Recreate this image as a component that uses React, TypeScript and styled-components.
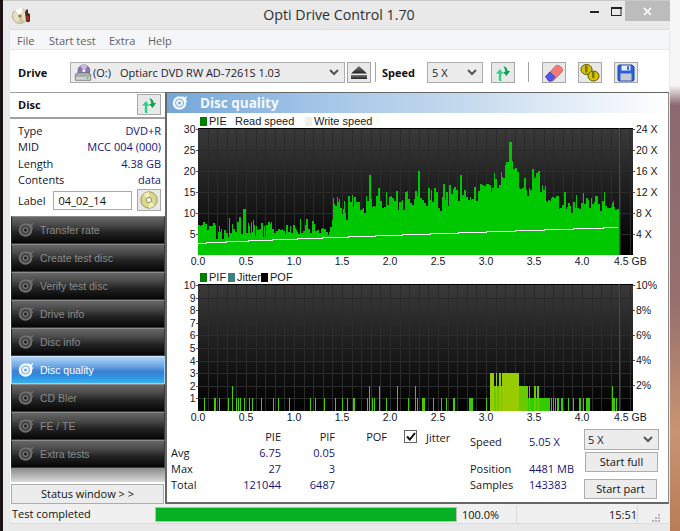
import React from "react";
import styled, { createGlobalStyle } from "styled-components";

const UI = `"Open Sans", "Noto Sans", sans-serif`;
const ARIAL = `"Liberation Sans", Arial, sans-serif`;

const Global = createGlobalStyle`
  html, body { margin: 0; padding: 0; background: #000; }
  body { width: 680px; height: 531px; overflow: hidden; font-family: ${UI}; }
  * { box-sizing: border-box; }
`;

const Desktop = styled.div`
  width: 680px; height: 531px; display: flex; padding-left: 3px;
  background:
    linear-gradient(90deg, #1a1214 0 3px, transparent 3px),
    linear-gradient(180deg, #f6f6f6 0, #f6f6f6 85px, #8a6a70 105px, #96706e 300px, #c89472 430px, #b87c58 531px);
`;
const Win = styled.div`
  width: 667px; height: 531px; background: #e9e9e9; border-top: 1px solid #c9c9c9;
  display: flex; flex-direction: column;
`;
const TitleBar = styled.div`
  height: 28px; flex: none; display: grid; grid-template-columns: 1fr auto 1fr; align-items: start;
`;
const AppIconBox = styled.div`padding: 6px 0 0 9px; height: 28px;`;
const Title = styled.div`
  font-size: 14.2px; line-height: 28px; color: #2c2f33; white-space: nowrap; margin-left: 5px;
`;
const WinControls = styled.div`display: flex; justify-content: flex-end; align-items: flex-start;`;
const Ctl = styled.div<{ $w: number }>`
  width: ${(p) => p.$w}px; height: 20px; display: flex; align-items: center; justify-content: center;
`;
const CloseBtn = styled(Ctl)`background: #bcbcbc;`;

const Client = styled.div`
  margin: 0 0 7px 7px; width: 659px; flex: 1; min-height: 0; display: flex; flex-direction: column; background: #fff;
  border-top: 1px solid #dcdcdc;
`;
const MenuBar = styled.div`
  height: 20px; flex: none; display: flex; background: #f5f6f7; border-bottom: 1px solid #e8e8e8;
  font-size: 11px; line-height: 21px; color: #5e6266; padding-left: 7px;
`;
const MenuItem = styled.span<{ $w: number }>`width: ${(p) => p.$w}px; white-space: nowrap;`;

const ToolBar = styled.div`height: 42px; flex: none; display: flex; align-items: flex-start; padding-top: 12px; background: #fff;`;
const Strong = styled.span<{ $ml: number; $w: number }>`
  font-size: 11px; font-weight: 700; color: #111; line-height: 22px;
  margin-left: ${(p) => p.$ml}px; width: ${(p) => p.$w}px;
`;
const SelectBox = styled.div<{ $w: number; $ml?: number }>`
  width: ${(p) => p.$w}px; height: 21px; margin-left: ${(p) => p.$ml ?? 0}px; flex: none;
  border: 1px solid #adadad; background: #ececec; display: flex; align-items: center;
  font-size: 11px; color: #1a1a2e; padding: 0 5px 0 3px; white-space: nowrap;
`;
const SelectText = styled.span<{ $ml?: number }>`flex: 1; margin-left: ${(p) => p.$ml ?? 0}px;`;
const DriveLetter = styled.span`width: 27px; margin-left: 1px; flex: none;`;
const ToolButton = styled.div<{ $ml?: number; $h?: number }>`
  width: 24px; height: ${(p) => p.$h ?? 21}px; flex: none; margin-left: ${(p) => p.$ml ?? 0}px;
  border: 1px solid #a8a8a8; background: #e8e8e8; display: flex; align-items: center; justify-content: center;
`;
const Sep = styled.div<{ $ml: number }>`width: 1px; height: 20px; background: #a5a5a5; margin-left: ${(p) => p.$ml}px; flex: none;`;

const Body = styled.div`flex: 1; min-height: 0; display: flex;`;
const LeftCol = styled.div`width: 156px; flex: none; display: flex; flex-direction: column; background: #fff;`;
const DiscPanel = styled.div`height: 123px; flex: none; border-top: 1px solid #9f9f9f;`;
const DiscHead = styled.div`
  height: 26px; display: flex; align-items: flex-start; justify-content: space-between;
  padding: 1px 5px 0 8px; border-bottom: 2px solid #a0a0a0;
  font-size: 11px; font-weight: 700; color: #111; line-height: 22px;
`;
const DiscRows = styled.div`padding: 4px 5px 0 8px; font-size: 11px;`;
const DiscRow = styled.div`display: flex; justify-content: space-between; height: 16.3px; line-height: 16px; color: #15151f;`;
const Blue = styled.span`color: #16167a;`;
const LabelRow = styled.div`display: flex; align-items: center; height: 22px; margin-top: 1px; color: #15151f;`;
const LabelInput = styled.div`
  width: 81px; height: 19px; margin-left: 7px; border: 1px solid #a9a9a9; background: #fff;
  line-height: 17px; padding-left: 5px; color: #111;
`;

const Nav = styled.div`
  margin-top: 1px; margin-left: 1px; width: 154px; flex: none; display: flex; flex-direction: column;
  background: linear-gradient(#8a8a8a, #d9d9d9) bottom / 100% 14px no-repeat; padding-bottom: 14px;
`;
const NavItem = styled.div<{ $active?: boolean }>`
  height: 28px; display: flex; align-items: center; padding-left: 6px; gap: 6px;
  border: 1px solid ${(p) => (p.$active ? "#9cd0f8" : "#3a3a3a")};
  border-top-color: ${(p) => (p.$active ? "#cfe6fb" : "#8a8a8a")};
  border-left-color: ${(p) => (p.$active ? "#9cd0f8" : "#222")};
  background: ${(p) =>
    p.$active
      ? "linear-gradient(#aed4f7 0%, #6ea6e3 35%, #3c7fd2 55%, #2f8fe0 75%, #35b3ef 100%)"
      : "linear-gradient(#666 0%, #4a4a4a 30%, #222 60%, #050505 100%)"};
  color: ${(p) => (p.$active ? "#fff" : "#8a8a8a")};
  font-family: ${ARIAL}; font-size: 10.5px; white-space: nowrap;
`;
const StatusBtn = styled.div`
  margin: 2px 0 0 1px; width: 153px; height: 20px; border: 1px solid #adadad; background: #ececec;
  text-align: center; font-size: 11px; line-height: 18px; color: #111;
`;

const Main = styled.div`
  flex: 1; min-width: 0; height: 412px; border: 2px solid #666; border-width: 1px 1px 2px 2px;
  border-right-color: #8a8a8a; margin-left: -1px; background: #fff; display: flex; flex-direction: column;
`;
const MainHead = styled.div`
  height: 20px; flex: none; display: flex; align-items: center; padding-left: 5px; gap: 12px;
  background: linear-gradient(90deg, #74a6d8 0%, #a3c5e7 30%, #c5daee 60%, #fff 100%);
  color: #f4f8fc; font-size: 13.5px; font-weight: 700;
`;
const Legend = styled.div<{ $mt: number }>`
  height: 14px; flex: none; margin-top: ${(p) => p.$mt}px; display: flex; align-items: center; padding-left: 33px;
  font-family: ${ARIAL}; font-size: 11px; color: #1a1a22; white-space: nowrap;
`;
const Swatch = styled.i<{ $c: string }>`
  width: 7px; height: 9px; background: ${(p) => p.$c}; display: block; margin-right: 2px; flex: none;
`;
const LegendText = styled.span<{ $w?: number }>`${(p) => (p.$w ? `width: ${p.$w}px;` : "")} flex: none;`;
const ChartSvg = styled.svg`display: block; flex: none; width: 501px; overflow: visible;`;

const Stats = styled.div`flex: 1; display: flex; font-size: 11px; color: #15151f; padding-top: 4px;`;
const StatsTable = styled.div`
  width: 250px; flex: none; display: grid; grid-template-columns: 47px 63px 54px 52px 30px;
  grid-auto-rows: 16px; line-height: 16px; padding-left: 4px;
`;
const Cell = styled.div<{ $right?: boolean; $blue?: boolean }>`
  text-align: ${(p) => (p.$right ? "right" : "left")};
  color: ${(p) => (p.$blue ? "#16167a" : "#15151f")};
`;
const CheckWrap = styled.div`display: flex; justify-content: flex-end; padding-top: 1px;`;
const Check = styled.div`
  width: 13px; height: 13px; border: 1px solid #666; background: #fff;
  display: flex; align-items: center; justify-content: center;
`;
const JitterCol = styled.div`width: 44px; flex: none; margin-left: 9px; padding-top: 1px; line-height: 16px;`;
const SpeedCol = styled.div`
  width: 115px; height: 64px; flex: none; display: grid; grid-template-columns: 59px 1fr; grid-template-rows: 16px 11px 16px 16px;
  padding-top: 5px; line-height: 16px;
`;
const RightCol = styled.div`width: 76px; flex: none; display: flex; flex-direction: column; margin-left: -1px; margin-top: 0;`;
const PushBtn = styled.div<{ $ml: number; $mt: number }>`
  width: 73px; height: 20px; margin-left: ${(p) => p.$ml}px; margin-top: ${(p) => p.$mt}px;
  border: 1px solid #adadad; background: #ececec; text-align: center; line-height: 18px; color: #111;
`;

const StatusBar = styled.div`
  height: 20px; flex: none; background: #f0f0f0; display: flex; align-items: flex-start;
  font-size: 11px; color: #111; border-bottom: 1px solid #dcdcdc; margin-top: 0;
`;
const StatusText = styled.div`width: 145px; padding-left: 2px; line-height: 20px; flex: none;`;
const Progress = styled.div`
  width: 302px; height: 15px; flex: none; margin-top: 3px; border: 1px solid #bcbcbc; background: #06b025;
`;
const Percent = styled.div`width: 60px; padding-left: 5px; line-height: 20px; flex: none; border-right: 1px solid #dcdcdc; height: 19px; margin-top: 1px;`;
const Clock = styled.div`flex: 1; text-align: right; line-height: 20px; border-right: 1px solid #dcdcdc; height: 19px; margin-top: 1px;`;
const Grip = styled.div`width: 31px; height: 19px; flex: none; display: flex; justify-content: flex-end; align-items: flex-end; padding-right: 8px;`;

/* ---------- chart data ---------- */
function rng(seed: number) {
  let a = seed;
  return () => {
    a |= 0; a = (a + 0x6d2b79f5) | 0;
    let t = Math.imul(a ^ (a >>> 15), 1 | a);
    t = (t + Math.imul(t ^ (t >>> 7), 61 | t)) ^ t;
    return ((t ^ (t >>> 14)) >>> 0) / 4294967296;
  };
}
const ENV: [number, number, number][] = [
  [0, 5, 8.5], [0.5, 5, 8], [1, 5, 7.5], [1.37, 5, 7.5], [1.39, 5, 9], [1.41, 12, 14], [1.5, 9.5, 13], [1.7, 10.5, 14],
  [1.85, 11, 15], [2, 11.5, 14.5], [2.3, 12.5, 16.5], [2.5, 11.5, 15.5], [2.8, 13, 16.5], [3, 14, 18], [3.15, 16, 20],
  [3.22, 20, 25], [3.28, 18, 24], [3.35, 15, 19], [3.5, 15, 20], [3.6, 13, 16], [3.75, 10.5, 13], [4, 11, 13.5],
  [4.3, 11, 13.5], [4.42, 8.5, 11],
];
function env(g: number): [number, number] {
  for (let i = 1; i < ENV.length; i++) {
    if (g <= ENV[i][0]) {
      const [a, l0, h0] = ENV[i - 1];
      const [b, l1, h1] = ENV[i];
      const t = (g - a) / (b - a);
      return [l0 + (l1 - l0) * t, h0 + (h1 - h0) * t];
    }
  }
  return [8, 11];
}
const SPIKES: Record<number, number> = { 46: 11, 171: 19, 221: 20, 312: 27, 313: 27, 42: 9, 150: 14, 180: 16, 262: 19, 340: 20, 367: 15, 398: 14, 406: 15 };
function piePath() {
  const r = rng(11);
  let d = "";
  const col = (x: number, w: number, v: number) => {
    const y = Math.round(254 - v * 4.2);
    d += `M${198 + x} ${y}V254H${198 + x + w}V${y}Z`;
  };
  let x = 0;
  while (x < 421) {
    const w = r() < 0.55 ? 2 : 1;
    const [l, h] = env(x / 96);
    const k = r();
    let v = k < 0.08 ? l - 1.5 * r() : k > 0.88 ? h + 1.2 * r() : l + (h - l) * r();
    if (SPIKES[x]) v = SPIKES[x];
    else if (SPIKES[x + 1]) v = SPIKES[x + 1];
    col(x, Math.min(w, 421 - x), v);
    x += w;
  }
  return d;
}
const PIE = piePath();
const SPEED = (() => {
  let p = "";
  for (let x = 0; x <= 420; x += 1) {
    const y = Math.round(242 - 16 * Math.pow(x / 420, 0.88)) + 0.5;
    p += `${198 + x},${y} `;
  }
  return p;
})();

const z1 = [118,146,150,163,190,214,219,226,238,253,262,289,325,340,373,436,451,478,511,532,545,547,563,566,607,622,628,664,730,757,772,778];
const z2 = [202,613,643,697,751];
const r1 = [8,13,40,64,79,100,103,199,393,400,405,412,415,445,460,490,589];
const PifBars: { x: number; w: number; h: number; c: string }[] = [
  ...z1.map((z) => ({ x: 165 + z / 3, w: 1, h: 1, c: "#44cc00" })),
  ...z2.map((z) => ({ x: 165 + z / 3, w: 1, h: 2, c: "#44cc00" })),
  ...r1.map((z) => ({ x: 420 + z / 3, w: 1, h: 1, c: "#44cc00" })),
  ...[[148,160],[300,390],[423,429],[478,484],[498,510],[576,585]].map(([a, b]) => ({ x: 420 + a / 3, w: (b - a) / 3, h: 1, c: "#33cc00" })),
  { x: 420 + 576 / 3, w: 1, h: 2, c: "#44cc00" },
  ...[[210,325],[328,332],[341,346],[352,357]].map(([a, b]) => ({ x: 420 + a / 3, w: (b - a) / 3, h: 2, c: "#66cc00" })),
  ...[[210,222],[228,232],[238,244],[246,297]].map(([a, b]) => ({ x: 420 + a / 3, w: (b - a) / 3, h: 3, c: "#99cc00" })),
].map((b) => ({ ...b, x: Math.round(b.x), w: Math.max(1, Math.round(b.w)) }));
const Stripes = [255, 260, 266, 272, 278].map((z) => Math.round(420 + z / 3));

const XLAB = ["0.0","0.5","1.0","1.5","2.0","2.5","3.0","3.5","4.0"];

function ChartFrame({ id, top, h, leftLabels, rightLabels, hLines, children }: {
  id: string; top: number; h: number;
  leftLabels: [string, number][]; rightLabels: [string, number][]; hLines: number[]; children: React.ReactNode;
}) {
  const bottom = top + h;
  const vx: number[] = [];
  for (let x = 198 + 9.6; x < 633; x += 9.6) vx.push(Math.round(x) + 0.5);
  return (
    <ChartSvg viewBox={`167 ${top} 501 ${h + 14}`} height={h + 14}>
      <defs>
        <linearGradient id={id} x1="0" y1="0" x2="0" y2="1">
          <stop offset="0" stopColor="#3a3a3a" />
          <stop offset="1" stopColor="#000" />
        </linearGradient>
      </defs>
      <rect x={198} y={top} width={435} height={h} fill={`url(#${id})`} />
      <g stroke="#2b2b2b" strokeWidth="1" shapeRendering="crispEdges">
        {vx.map((x) => <line key={x} x1={x} x2={x} y1={top} y2={bottom} />)}
        {hLines.map((y) => <line key={y} x1={198} x2={633} y1={y + 0.5} y2={y + 0.5} />)}
      </g>
      <line x1={198} x2={633} y1={top + 0.5} y2={top + 0.5} stroke="#000" strokeWidth="1" shapeRendering="crispEdges" />
      <g shapeRendering="crispEdges">{children}</g>
      <line x1={619.5} x2={619.5} y1={top} y2={bottom} stroke="#c81414" strokeWidth="1" shapeRendering="crispEdges" />
      <g stroke="#555" shapeRendering="crispEdges">
        {leftLabels.map(([l, y]) => <line key={l} x1={196} x2={198} y1={y + 0.5} y2={y + 0.5} />)}
        {rightLabels.map(([l, y]) => <line key={l} x1={633} x2={635} y1={y + 0.5} y2={y + 0.5} />)}
      </g>
      <g fontFamily={ARIAL} fontSize="10.5" fill="#15151f">
        {leftLabels.map(([l, y]) => <text key={l} x={195.5} y={y + 3.5} textAnchor="end">{l}</text>)}
        {rightLabels.map(([l, y]) => <text key={l} x={636} y={y + 3.5}>{l}</text>)}
        {XLAB.map((l, i) => <text key={l} x={198 + i * 48} y={bottom + 10} textAnchor="middle">{l}</text>)}
        <text x={614} y={bottom + 10}>4.5 GB</text>
      </g>
    </ChartSvg>
  );
}

/* ---------- icons ---------- */
const Chevron = () => (
  <svg width="10" height="7" viewBox="0 0 10 7"><path d="M1 1l4 4 4-4" fill="none" stroke="#555" strokeWidth="2" /></svg>
);
const AppIcon = () => (
  <svg width="20" height="18" viewBox="0 0 20 18">
    <circle cx="8" cy="9" r="7.5" fill="#e6dfc4" stroke="#b5ad92" />
    <path d="M8 9L3 3a7.5 7.5 0 0 1 8-1.4z" fill="#fff" />
    <path d="M8 9l5 6a7.5 7.5 0 0 1-6 1.4z" fill="#cfc6a0" />
    <circle cx="8" cy="9" r="1.8" fill="#8b8468" />
    <path d="M13 5l2-3 1 1v3l2 1v7c0 1.500-4 1.500-4 0z" fill="#4b2a22" />
    <path d="M14.500 9h2.500v4.500h-2.500z" fill="#a82a20" />
  </svg>
);
const DriveIcon = () => (
  <svg width="18" height="18" viewBox="0 0 20 19">
    <circle cx="11" cy="7" r="6.5" fill="#8c78b8" stroke="#6a5a94" />
    <path d="M11 7L7 2a6.500 6.500 0 0 1 8 0z" fill="#c9bde2" />
    <circle cx="11" cy="7" r="1.700" fill="#f0eaf8" />
    <path d="M1.500 11l3-2h11l3 2v6.500h-17z" fill="#a9aeb0" stroke="#6d7274" />
    <path d="M2 14h16v3H2z" fill="#d2d6d6" />
    <rect x="14" y="14.500" width="2" height="1.500" fill="#3fb04a" />
  </svg>
);
const EjectIcon = () => (
  <svg width="16" height="13" viewBox="0 0 16 13">
    <defs>
      <linearGradient id="ej" x1="0" y1="0" x2="0" y2="1"><stop offset="0" stopColor="#777" /><stop offset="1" stopColor="#222" /></linearGradient>
    </defs>
    <path d="M8 0l8 7.500H0z" fill="url(#ej)" />
    <rect y="9" width="16" height="4" fill="url(#ej)" />
  </svg>
);
const SwapIcon = () => (
  <svg width="18" height="18" viewBox="0 0 18 18">
    <path d="M5 17.500C3.800 15 4.200 12.500 4.500 10H1L6 4.500 10.800 10H8c-.5 2.500-.8 5 .5 7.500z" fill="#30d088" stroke="#fff" strokeWidth=".7" />
    <path d="M8.500 1.500c3 .3 5 2 5.500 5H17L12.500 12.500 8 7.500h2.800C10.500 5 9.800 3 8.500 1.500z" fill="#14a055" stroke="#fff" strokeWidth=".7" />
  </svg>
);
const EraserIcon = () => (
  <svg width="20" height="18" viewBox="0 0 20 18">
    <path d="M1.500 12.500L11 2.500c1.500-1.500 3-1.500 5-.2l1.500 1.400c1.500 1.500 1.500 3 .2 4.500L9 17l-4 .2z" fill="#f47a7a" stroke="#c25656" strokeWidth=".7" />
    <path d="M1.500 12.500L6 8l5 5-3.500 4H4.500z" fill="#4a58ee" stroke="#3540b0" strokeWidth=".7" />
  </svg>
);
const CoinsIcon = () => (
  <svg width="20" height="19" viewBox="0 0 20 19">
    <ellipse cx="6.500" cy="6.500" rx="5.500" ry="5" fill="#d6c400" stroke="#5d5400" />
    <rect x="5" y="2.500" width="2.500" height="7" fill="#77770a" />
    <ellipse cx="13.500" cy="13" rx="5.500" ry="5" fill="#d6c400" stroke="#5d5400" />
    <rect x="12" y="8" width="2.500" height="7" fill="#77770a" />
  </svg>
);
const SaveIcon = () => (
  <svg width="18" height="18" viewBox="0 0 18 18">
    <path d="M1 2.500A1.500 1.500 0 0 1 2.500 1H15l2 2v12.500a1.500 1.500 0 0 1-1.500 1.500h-13A1.500 1.500 0 0 1 1 15.500z" fill="#2a62d8" stroke="#1c449c" />
    <rect x="4.500" y="1.500" width="9" height="5" fill="#e8eef8" />
    <rect x="10" y="2.300" width="2" height="3.400" fill="#2a62d8" />
    <rect x="3.500" y="9.500" width="11" height="7" fill="#c6cad2" />
  </svg>
);
const CdIcon = () => (
  <svg width="18" height="18" viewBox="0 0 18 18">
    <circle cx="9" cy="9" r="8.200" fill="#dbd88a" stroke="#9a9a60" />
    <path d="M9 9L3.500 3.500A8 8 0 0 1 9 1z" fill="#f2f0c0" />
    <path d="M9 9l5.500 5.500A8 8 0 0 1 9 17z" fill="#f2f0c0" />
    <circle cx="9" cy="9" r="2.600" fill="#fff" stroke="#8d8d5a" />
  </svg>
);
const NavIcon = ({ c, hole }: { c: string; hole: string }) => (
  <svg width="16" height="16" viewBox="0 0 16 16">
    <circle cx="7.500" cy="8" r="6.800" fill={c} />
    <circle cx="7.500" cy="8" r="4" fill="none" stroke={hole} strokeWidth="1" />
    <circle cx="7.500" cy="8" r="1.500" fill={hole} />
    <path d="M10.500 1.500l1.500 2 2-1-1 2.500 2 1.500" fill="none" stroke={c} strokeWidth="1.400" />
  </svg>
);
const GripIcon = () => (
  <svg width="9" height="9" viewBox="0 0 9 9" fill="#b5b5b5">
    <rect x="6" y="0" width="2" height="2" /><rect x="3" y="3" width="2" height="2" /><rect x="6" y="3" width="2" height="2" />
    <rect x="0" y="6" width="2" height="2" /><rect x="3" y="6" width="2" height="2" /><rect x="6" y="6" width="2" height="2" />
  </svg>
);

/* ---------- page ---------- */
const NAV = ["Transfer rate", "Create test disc", "Verify test disc", "Drive info", "Disc info", "Disc quality", "CD Bler", "FE / TE", "Extra tests"];

const hTop = [149, 170, 191, 212, 233];
const hBot = [297, 309, 322, 334, 347, 360, 372, 385, 397];

export default function App() {
  return (
    <Desktop>
      <Global />
      <Win>
        <TitleBar>
          <AppIconBox><AppIcon /></AppIconBox>
          <Title>Opti Drive Control 1.70</Title>
          <WinControls>
            <Ctl $w={26}><svg width="9" height="3" viewBox="0 0 9 3"><rect width="9" height="2" y="1" fill="#222" /></svg></Ctl>
            <Ctl $w={18}><svg width="11" height="9" viewBox="0 0 11 9"><rect x=".5" y="1" width="9.500" height="7.500" fill="none" stroke="#222" /><rect x="0" y="0" width="11" height="2" fill="#222" /></svg></Ctl>
            <CloseBtn $w={45}><svg width="9" height="9" viewBox="0 0 9 9"><path d="M1 1l7 7M8 1l-7 7" stroke="#fff" strokeWidth="1.600" /></svg></CloseBtn>
          </WinControls>
        </TitleBar>
        <Client>
          <MenuBar>
            <MenuItem $w={32}>File</MenuItem>
            <MenuItem $w={60}>Start test</MenuItem>
            <MenuItem $w={39}>Extra</MenuItem>
            <MenuItem $w={40}>Help</MenuItem>
          </MenuBar>
          <ToolBar>
            <Strong $ml={8} $w={52}>Drive</Strong>
            <SelectBox $w={275}>
              <DriveIcon />
              <DriveLetter>(O:)</DriveLetter>
              <SelectText>Optiarc DVD RW AD-7261S 1.03</SelectText>
              <Chevron />
            </SelectBox>
            <ToolButton $ml={2}><EjectIcon /></ToolButton>
            <Sep $ml={4} />
            <Strong $ml={6} $w={45}>Speed</Strong>
            <SelectBox $w={56}>
              <SelectText $ml={1}>5 X</SelectText>
              <Chevron />
            </SelectBox>
            <ToolButton $ml={8}><SwapIcon /></ToolButton>
            <Sep $ml={13} />
            <ToolButton $ml={13}><EraserIcon /></ToolButton>
            <ToolButton $ml={12}><CoinsIcon /></ToolButton>
            <ToolButton $ml={12}><SaveIcon /></ToolButton>
          </ToolBar>
          <Body>
            <LeftCol>
              <DiscPanel>
                <DiscHead>
                  <span>Disc</span>
                  <ToolButton><SwapIcon /></ToolButton>
                </DiscHead>
                <DiscRows>
                  <DiscRow><span>Type</span><Blue>DVD+R</Blue></DiscRow>
                  <DiscRow><span>MID</span><Blue>MCC 004 (000)</Blue></DiscRow>
                  <DiscRow><span>Length</span><Blue>4.38 GB</Blue></DiscRow>
                  <DiscRow><span>Contents</span><Blue>data</Blue></DiscRow>
                  <LabelRow>
                    <span>Label</span>
                    <LabelInput>04_02_14</LabelInput>
                    <ToolButton $ml={5} $h={22}><CdIcon /></ToolButton>
                  </LabelRow>
                </DiscRows>
              </DiscPanel>
              <Nav>
                {NAV.map((n) => {
                  const active = n === "Disc quality";
                  return (
                    <NavItem key={n} $active={active}>
                      <NavIcon c={active ? "#f4f8ff" : "#6d6d6d"} hole={active ? "#6ea6e3" : "#222"} />
                      <span>{n}</span>
                    </NavItem>
                  );
                })}
              </Nav>
              <StatusBtn>Status window &gt; &gt;</StatusBtn>
            </LeftCol>
            <Main>
              <MainHead>
                <NavIcon c="#f4f8ff" hole="#7aa9d8" />
                <span>Disc quality</span>
              </MainHead>
              <Legend $mt={1}>
                <Swatch $c="#007f00" />
                <LegendText $w={26}>PIE</LegendText>
                <LegendText $w={70}>Read speed</LegendText>
                <Swatch $c="#eeeeee" />
                <LegendText>Write speed</LegendText>
              </Legend>
              <ChartFrame id="g1" top={127} h={127}
                leftLabels={[["30",128],["25",149],["20",170],["15",191],["10",212],["5",233]]}
                rightLabels={[["24 X",128],["20 X",149],["16 X",170],["12 X",191],["8 X",212],["4 X",233]]}
                hLines={hTop}>
                <path d={PIE} fill="#00c800" />
                <polyline points={SPEED} fill="none" stroke="#fff" strokeWidth="1" />
              </ChartFrame>
              <Legend $mt={1}>
                <Swatch $c="#007f00" />
                <LegendText $w={19}>PIF</LegendText>
                <Swatch $c="#3f7f7f" />
                <LegendText $w={24}>Jitter</LegendText>
                <Swatch $c="#000000" />
                <LegendText>POF</LegendText>
              </Legend>
              <ChartFrame id="g2" top={283} h={127}
                leftLabels={[["10",284],["9",297],["8",309],["7",322],["6",334],["5",347],["4",360],["3",372],["2",385],["1",397]]}
                rightLabels={[["10%",284],["8%",309],["6%",334],["4%",359],["2%",384]]}
                hLines={hBot}>
                {PifBars.map((b, i) => (
                  <rect key={i} x={b.x} y={410 - b.h * 12.6} width={b.w} height={b.h * 12.6} fill={b.c} />
                ))}
                {Stripes.map((x) => <rect key={x} x={x} y={384.800} width={1} height={25.200} fill="#99cc00" />)}
              </ChartFrame>
              <Stats>
                <StatsTable>
                  <Cell /><Cell $right>PIE</Cell><Cell $right>PIF</Cell><Cell $right>POF</Cell>
                  <CheckWrap><Check><svg width="10" height="9" viewBox="0 0 10 9"><path d="M1 4.500l2.800 3L9 1" fill="none" stroke="#111" strokeWidth="2" /></svg></Check></CheckWrap>
                  <Cell>Avg</Cell><Cell $right $blue>6.75</Cell><Cell $right $blue>0.05</Cell><Cell /><Cell />
                  <Cell>Max</Cell><Cell $right $blue>27</Cell><Cell $right $blue>3</Cell><Cell /><Cell />
                  <Cell>Total</Cell><Cell $right $blue>121044</Cell><Cell $right $blue>6487</Cell><Cell /><Cell />
                </StatsTable>
                <JitterCol>Jitter</JitterCol>
                <SpeedCol>
                  <Cell>Speed</Cell><Cell $blue>5.05 X</Cell>
                  <Cell /><Cell />
                  <Cell>Position</Cell><Cell $blue>4481 MB</Cell>
                  <Cell>Samples</Cell><Cell $blue>143383</Cell>
                </SpeedCol>
                <RightCol>
                  <SelectBox $w={75}><SelectText>5 X</SelectText><Chevron /></SelectBox>
                  <PushBtn $ml={1} $mt={2}>Start full</PushBtn>
                  <PushBtn $ml={0} $mt={7}>Start part</PushBtn>
                </RightCol>
              </Stats>
            </Main>
          </Body>
          <StatusBar>
            <StatusText>Test completed</StatusText>
            <Progress />
            <Percent>100.0%</Percent>
            <Clock>15:51</Clock>
            <Grip><GripIcon /></Grip>
          </StatusBar>
        </Client>
      </Win>
    </Desktop>
  );
}
